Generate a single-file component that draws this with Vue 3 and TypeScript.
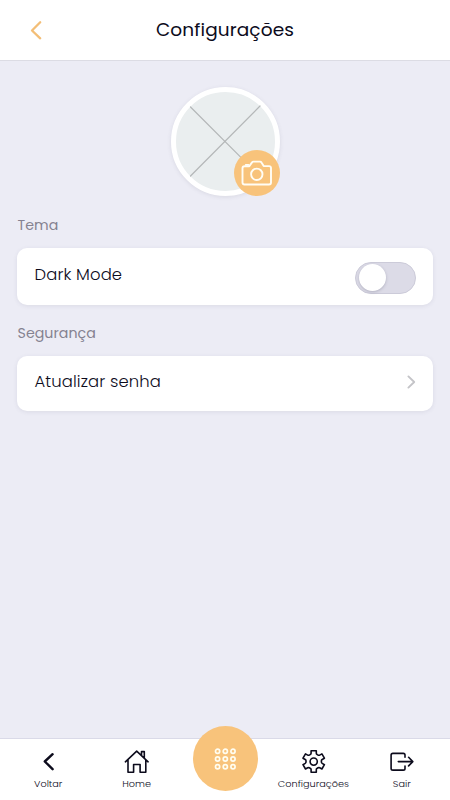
<script setup lang="ts">
import { ref } from 'vue'

const darkMode = ref(false)
const dots = [3.6, 11.3, 19]
</script>

<template>
  <div class="screen">
    <header class="header">
      <button class="back" aria-label="Voltar">
        <svg width="14" height="22" viewBox="0 0 14 22"><path d="M11.2 3.2 3 11.5l8.2 7.8" /></svg>
      </button>
      <h1 class="title">Configurações</h1>
    </header>

    <main class="content">
      <div class="avatar">
        <svg class="placeholder" width="98" height="98" viewBox="0 0 98 98">
          <path d="M14.5 15 84.5 85M84 14 14.5 84" />
        </svg>
        <button class="camera" aria-label="Alterar foto">
          <svg width="32" height="26" viewBox="0 0 32 26">
            <path d="M3.5 6.2H8.3L11 2.4Q11.5 1.6 12.4 1.6h6.6q1 0 1.5.9l2.2 3.6h5.3q2 0 2 2v14.4q0 2-2 2H3.5q-2 0-2-2V8.2q0-2 2-2Z" />
            <path d="M4.8 4.9h2.7" />
            <circle cx="15.8" cy="14.3" r="5.7" />
          </svg>
        </button>
      </div>

      <h2 class="label tema">Tema</h2>
      <div class="card theme-card">
        <span class="dark">Dark Mode</span>
        <button class="switch" :class="{ on: darkMode }" aria-label="Dark Mode" @click="darkMode = !darkMode">
          <span class="knob"></span>
        </button>
      </div>

      <h2 class="label security">Segurança</h2>
      <div class="card password-card">
        <span class="senha">Atualizar senha</span>
        <svg class="chevron" width="10" height="16" viewBox="0 0 10 16"><path d="M2.4 2.4 8.2 8l-5.8 5.6" /></svg>
      </div>
    </main>

    <nav class="nav">
      <a class="item">
        <svg class="bold" width="26" height="26" viewBox="0 0 26 26"><path d="M17.6 6.2 9.8 13.5l7.8 7.7" /></svg>
        <span>Voltar</span>
      </a>
      <a class="item">
        <svg width="26" height="26" viewBox="0 0 26 26">
          <path d="M1.4 13.8 12.7 3.2 24.1 13.8M4 12v12.3h5.6v-7.8h6.5v7.8h5.7V12M17.5 7V3.6h2.8v6.1" />
        </svg>
        <span>Home</span>
      </a>
      <div class="item"></div>
      <a class="item">
        <svg width="26" height="26" viewBox="0 0 26 26">
          <path d="M11.1 2.7h5.2v2.6q0 .9.9 1.3l.9.5q.8.4 1.6 0l2.2-1.2 2.5 4.3-2.2 1.3q-.8.5-.8 1.3v1.3q0 .8.8 1.3l2.2 1.3-2.5 4.3-2.2-1.2q-.8-.4-1.6 0l-.9.5q-.9.4-.9 1.3v2.7h-5.2v-2.7q0-.9-.9-1.3l-.9-.5q-.8-.4-1.6 0l-2.2 1.2L3 16.7l2.2-1.3q.8-.5.8-1.3v-1.3q0-.8-.8-1.3L3 10.2l2.5-4.3 2.2 1.2q.8.4 1.6 0l.9-.5q.9-.4.9-1.3Z" />
          <circle cx="13.7" cy="13.6" r="3.6" />
        </svg>
        <span>Configurações</span>
      </a>
      <a class="item">
        <svg width="26" height="26" viewBox="0 0 26 26">
          <path d="M16 9.3V7.1Q16 5.4 14.3 5.4H3.9Q2.1 5.4 2.1 7.1v13.3q0 1.7 1.8 1.7h10.4q1.7 0 1.7-1.7v-2.3M9.3 13.6h14.1M19.6 9.3l4.2 4.3-4.2 4.3" />
        </svg>
        <span>Sair</span>
      </a>
      <button class="menu" aria-label="Menu">
        <svg width="24" height="24" viewBox="0 0 24 24">
          <template v-for="y in dots" :key="y">
            <circle v-for="x in dots" :key="x" :cx="x" :cy="y + 0.7" r="2.1" />
          </template>
        </svg>
      </button>
    </nav>
  </div>
</template>

<style>
body {
  margin: 0;
}
</style>

<style scoped>
.screen {
  display: flex;
  flex-direction: column;
  width: 450px;
  height: 800px;
  overflow: hidden;
  box-sizing: border-box;
  background: #ececf5;
  color: #0c0b1c;
  font-family: Poppins, Inter, sans-serif;
}
svg {
  display: block;
  fill: none;
  stroke: currentColor;
  stroke-linecap: round;
  stroke-linejoin: round;
}
button {
  padding: 0;
  border: 0;
}
.header {
  display: grid;
  grid-template-columns: 60px 1fr 60px;
  align-items: center;
  height: 60px;
  background: #fff;
  border-bottom: 1px solid #dcdce4;
}
.back {
  padding-left: 29px;
  background: none;
  color: #f3be77;
}
.back svg {
  stroke-width: 2.3;
}
.title {
  margin: 0;
  text-align: center;
  font-size: 18.5px;
  font-weight: 400;
  line-height: 28px;
  letter-spacing: 0.12px;
}
.content {
  flex: 1;
  padding: 26px 17px 0;
}
.avatar {
  position: relative;
  box-sizing: border-box;
  width: 109px;
  height: 109px;
  margin: 0 auto;
  border: 5.5px solid #fff;
  border-radius: 50%;
  background: #eaeeef;
  box-shadow: 0 1px 4px rgba(70, 70, 100, 0.12);
}
.placeholder {
  stroke: #b4b7b8;
  stroke-width: 1.2;
}
.camera {
  position: absolute;
  right: -5.5px;
  bottom: -5px;
  display: grid;
  place-items: center;
  width: 46px;
  height: 46px;
  border-radius: 50%;
  background: #f8c37b;
  color: #fffdf5;
}
.camera svg {
  stroke-width: 1.9;
}
.label {
  margin: 0;
  padding-left: 0.5px;
  color: #858290;
  font-size: 14.2px;
  font-weight: 400;
  line-height: 20px;
  letter-spacing: 0.05px;
}
.tema {
  margin-top: 19px;
}
.security {
  margin-top: 18px;
}
.card {
  display: flex;
  align-items: center;
  justify-content: space-between;
  box-sizing: border-box;
  padding: 0 17px 0 17.5px;
  border-radius: 10px;
  background: #fff;
  box-shadow: 0 1px 4px rgba(70, 70, 100, 0.1);
  font-size: 16.4px;
  font-weight: 300;
  line-height: 24px;
}
.theme-card {
  height: 56.5px;
  margin-top: 13px;
}
.password-card {
  height: 55px;
  margin-top: 13px;
}
.dark {
  margin-bottom: 2px;
  letter-spacing: 0.13px;
}
.senha {
  margin-bottom: 3px;
  letter-spacing: 0.13px;
}
.switch {
  display: flex;
  align-items: center;
  box-sizing: border-box;
  width: 61px;
  height: 32px;
  margin-top: 3px;
  padding: 0 3px;
  border: 1px solid #cccbd9;
  border-radius: 16px;
  background: #dcdbe7;
}
.switch.on {
  justify-content: flex-end;
  background: #f8c37b;
}
.knob {
  width: 27px;
  height: 27px;
  border-radius: 50%;
  background: #fff;
  box-shadow: 0 1px 3px rgba(50, 50, 80, 0.25);
}
.chevron {
  margin-bottom: 2px;
  color: #c4c4c8;
  stroke-width: 1.9;
}
.nav {
  position: relative;
  display: grid;
  grid-template-columns: repeat(5, 88.4px);
  justify-content: center;
  height: 61px;
  border-top: 1px solid #dadae8;
  background: #fff;
}
.item {
  display: flex;
  flex-direction: column;
  align-items: center;
  padding-top: 9px;
  font-size: 9.7px;
  font-weight: 300;
  line-height: 14px;
  white-space: nowrap;
}
.item svg {
  stroke-width: 1.6;
}
.item .bold {
  stroke-width: 2.4;
}
.item span {
  margin-top: 3px;
}
.menu {
  position: absolute;
  top: -13px;
  left: 193px;
  display: grid;
  place-items: center;
  width: 65px;
  height: 65px;
  border-radius: 50%;
  background: #f8c37b;
  color: #fffdf0;
}
.menu svg {
  stroke-width: 1.7;
}
</style>
